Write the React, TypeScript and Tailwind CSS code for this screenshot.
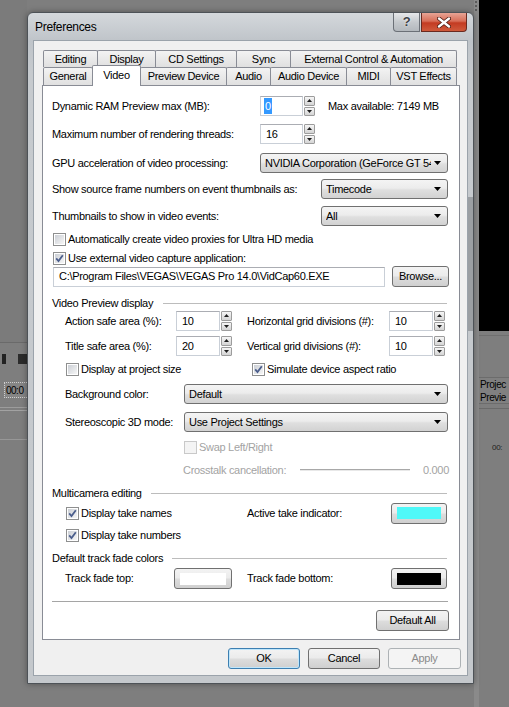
import React from 'react';

type Kids = { children?: React.ReactNode };

function Check({ checked = false, disabled = false }: { checked?: boolean; disabled?: boolean }) {
  if (disabled) {
    return <span className="h-[13px] w-[13px] shrink-0 border border-[#c9c9c9] bg-[#f4f4f4]" />;
  }
  return (
    <span className="flex h-[13px] w-[13px] shrink-0 border border-[#8e8f8f] bg-white p-[1px]">
      <span className="flex h-full w-full items-center justify-center bg-gradient-to-br from-[#cbcfd5] to-[#f6f6f6]">
        {checked && (
          <svg width="9" height="9" viewBox="0 0 9 9">
            <path d="M1.2 4.4 L3.5 7 L7.8 1.3" fill="none" stroke="#4b5e8c" strokeWidth="1.8" />
          </svg>
        )}
      </span>
    </span>
  );
}

function Field({ className = '', children }: Kids & { className?: string }) {
  return (
    <div className={`flex h-[20px] shrink-0 items-center overflow-hidden whitespace-nowrap border border-[#c9cfd7] border-t-[#abadb3] bg-white pl-[5px] ${className}`}>
      {children}
    </div>
  );
}

function Spin() {
  return (
    <div className="ml-[1px] flex h-[20px] w-[11px] shrink-0 flex-col gap-[1px]">
      <div className="flex flex-1 items-center justify-center rounded-[1px] border border-[#9c9c9c] bg-gradient-to-b from-[#f6f6f6] to-[#d4d4d4]">
        <svg width="5" height="3" viewBox="0 0 5 3">
          <path d="M0 3 L2.5 0 L5 3Z" fill="#1e1e1e" />
        </svg>
      </div>
      <div className="flex flex-1 items-center justify-center rounded-[1px] border border-[#9c9c9c] bg-gradient-to-b from-[#f6f6f6] to-[#d4d4d4]">
        <svg width="5" height="3" viewBox="0 0 5 3">
          <path d="M0 0 L5 0 L2.5 3Z" fill="#1e1e1e" />
        </svg>
      </div>
    </div>
  );
}

function Combo({ className, text }: { className: string; text: string }) {
  return (
    <div className={`flex h-[20px] shrink-0 items-center rounded-[3px] border border-[#707070] bg-[linear-gradient(to_bottom,#f4f4f4_0%,#ececec_45%,#dfdfdf_55%,#d2d2d2_100%)] pl-[4px] pr-[6px] ${className}`}>
      <span className="flex-1 overflow-hidden whitespace-nowrap">{text}</span>
      <svg width="7" height="4" viewBox="0 0 7 4" className="ml-[3px] shrink-0">
        <path d="M0 0 H7 L3.5 4Z" fill="#000" />
      </svg>
    </div>
  );
}

function Btn({ className, children }: Kids & { className: string }) {
  return (
    <div className={`flex h-[21px] shrink-0 items-center justify-center rounded-[3px] border border-[#707070] bg-[linear-gradient(to_bottom,#f3f3f3_0%,#ebebeb_48%,#dddddd_52%,#cfcfcf_100%)] ${className}`}>
      {children}
    </div>
  );
}

function ColorBtn({ className, swatch }: { className: string; swatch: string }) {
  return (
    <Btn className={`px-[5px] ${className}`}>
      <span className={`h-[12px] w-full ${swatch}`} />
    </Btn>
  );
}

function Group({ label, gap }: { label: string; gap: string }) {
  return (
    <div className="flex h-[14px] items-center">
      <span>{label}</span>
      <span className={`mr-[2px] h-px flex-1 bg-[#bcbcbc] ${gap}`} />
    </div>
  );
}

function Tab({ w, label, active = false, first = false }: { w: string; label: string; active?: boolean; first?: boolean }) {
  const base = `flex shrink-0 items-center justify-center rounded-t-[2px] border border-b-0 border-[#898c95] whitespace-nowrap ${w} ${first ? '' : '-ml-px'}`;
  if (active) {
    return <div className={`${base} relative z-10 -mt-[2px] h-[21px] bg-white pb-[2px]`}>{label}</div>;
  }
  return <div className={`${base} h-full bg-gradient-to-b from-[#f3f3f3] to-[#e0e0e0]`}>{label}</div>;
}

function Preferences() {
  return (
    <div className="absolute left-[27px] top-[12px] flex h-[672px] w-[447px] flex-col rounded-t-[6px] border border-[#4d5257] bg-[linear-gradient(to_bottom,#d4d8dc_0px,#bfc4c9_28px,#c6cace_60px,#c4c8cc_100%)] shadow-[0_0_6px_rgba(0,0,0,0.35)]">
      {/* title bar */}
      <div className="flex h-[27px] shrink-0 items-start">
        <span className="pl-[7px] pt-[5px] text-[12px] tracking-[-0.3px] text-black">Preferences</span>
        <div className="ml-auto mr-[6px] flex h-[19px] gap-[1px]">
          <div className="flex w-[27px] items-center justify-center rounded-bl-[4px] border border-t-0 border-[#6b7077] bg-gradient-to-b from-[#e6e8ea] via-[#c5c9cd] to-[#b3b8bd] text-[13px] font-bold text-[#3e4146] [text-shadow:0_0_2px_#fff]">
            ?
          </div>
          <div className="flex w-[46px] items-center justify-center rounded-br-[4px] border border-t-0 border-[#6a2a20] bg-[linear-gradient(to_bottom,#e7a495_0%,#d86e58_45%,#c33b22_55%,#cf5a3c_100%)]">
            <svg width="14" height="11" viewBox="0 0 14 11">
              <path d="M2 1.5 L12 9.5 M12 1.5 L2 9.5" stroke="#4a1a12" strokeWidth="4" strokeLinecap="round" />
              <path d="M2 1.5 L12 9.5 M12 1.5 L2 9.5" stroke="#ffffff" strokeWidth="2.4" strokeLinecap="round" />
            </svg>
          </div>
        </div>
      </div>

      <div className="flex flex-1">
        <div className="w-[5px] shrink-0" />
        {/* client area */}
        <div className="flex h-[636px] w-[435px] shrink-0 flex-col border border-[#9ba3ab] bg-[#f0f0f0] pl-[8px] pt-[9px]">
          <div className="mr-[7px] flex flex-col">
            <div className="ml-[1px] flex h-[17px]">
              <Tab first w="w-[55px]" label="Editing" />
              <Tab w="w-[59px]" label="Display" />
              <Tab w="w-[82px]" label="CD Settings" />
              <Tab w="w-[55px]" label="Sync" />
              <Tab w="w-[167px]" label="External Control & Automation" />
            </div>
            <div className="ml-[1px] flex h-[18px] items-start">
              <Tab first w="w-[50px]" label="General" />
              <Tab active w="w-[49px]" label="Video" />
              <Tab w="w-[87px]" label="Preview Device" />
              <Tab w="w-[45px]" label="Audio" />
              <Tab w="w-[77px]" label="Audio Device" />
              <Tab w="w-[45px]" label="MIDI" />
              <Tab w="w-[67px]" label="VST Effects" />
            </div>

            {/* tab page */}
            <div className="flex h-[555px] flex-col border border-[#898c95] bg-white pl-[9px] pr-[10px] pt-[10px]">
              <div className="flex h-[20px] items-center">
                <span className="w-[208px] shrink-0">Dynamic RAM Preview max (MB):</span>
                <Field className="w-[43px] !pl-[3px]">
                  <span className="bg-[#3399ff] px-[1px] text-white">0</span>
                </Field>
                <Spin />
                <span className="ml-[13px]">Max available: 7149 MB</span>
              </div>
              <div className="mt-[8px] flex h-[20px] items-center">
                <span className="w-[208px] shrink-0">Maximum number of rendering threads:</span>
                <Field className="w-[43px]">16</Field>
                <Spin />
              </div>
              <div className="mt-[9px] flex h-[20px] items-center">
                <span className="w-[208px] shrink-0">GPU acceleration of video processing:</span>
                <Combo className="w-[188px]" text="NVIDIA Corporation (GeForce GT 540M)" />
              </div>
              <div className="mt-[6px] flex h-[20px] items-center">
                <span className="w-[269px] shrink-0 whitespace-nowrap">Show source frame numbers on event thumbnails as:</span>
                <Combo className="w-[127px]" text="Timecode" />
              </div>
              <div className="mt-[7px] flex h-[20px] items-center">
                <span className="w-[269px] shrink-0">Thumbnails to show in video events:</span>
                <Combo className="w-[127px]" text="All" />
              </div>
              <div className="ml-[1px] mt-[6px] flex h-[14px] items-center gap-[2px]">
                <Check />
                <span>Automatically create video proxies for Ultra HD media</span>
              </div>
              <div className="ml-[1px] mt-[5px] flex h-[14px] items-center gap-[2px]">
                <Check checked />
                <span>Use external video capture application:</span>
              </div>
              <div className="mt-[1px] flex h-[21px] items-center">
                <Field className="ml-[1px] w-[332px]">C:\Program Files\VEGAS\VEGAS Pro 14.0\VidCap60.EXE</Field>
                <Btn className="ml-auto w-[57px]">Browse...</Btn>
              </div>

              <div className="mt-[9px]">
                <Group label="Video Preview display" gap="ml-[10px]" />
              </div>
              <div className="mt-[1px] flex h-[20px] items-center">
                <span className="ml-[13px] w-[111px] shrink-0">Action safe area (%):</span>
                <Field className="w-[44px]">10</Field>
                <Spin />
                <span className="ml-[15px] w-[142px] shrink-0">Horizontal grid divisions (#):</span>
                <Field className="w-[44px]">10</Field>
                <Spin />
              </div>
              <div className="mt-[5px] flex h-[20px] items-center">
                <span className="ml-[13px] w-[111px] shrink-0">Title safe area (%):</span>
                <Field className="w-[44px]">20</Field>
                <Spin />
                <span className="ml-[15px] w-[142px] shrink-0">Vertical grid divisions (#):</span>
                <Field className="w-[44px]">10</Field>
                <Spin />
              </div>
              <div className="mt-[6px] flex h-[14px] items-center">
                <div className="flex w-[200px] shrink-0 items-center gap-[2px] pl-[14px]">
                  <Check />
                  <span>Display at project size</span>
                </div>
                <div className="flex items-center gap-[2px]">
                  <Check checked />
                  <span>Simulate device aspect ratio</span>
                </div>
              </div>
              <div className="mt-[8px] flex h-[20px] items-center">
                <span className="ml-[13px] w-[119px] shrink-0">Background color:</span>
                <Combo className="w-[264px]" text="Default" />
              </div>
              <div className="mt-[8px] flex h-[20px] items-center">
                <span className="ml-[13px] w-[119px] shrink-0">Stereoscopic 3D mode:</span>
                <Combo className="w-[264px]" text="Use Project Settings" />
              </div>
              <div className="ml-[132px] mt-[8px] flex h-[14px] items-center gap-[2px] text-[#a3a3a3]">
                <Check disabled />
                <span>Swap Left/Right</span>
              </div>
              <div className="ml-[131px] mt-[9px] flex h-[14px] items-center text-[#a3a3a3]">
                <span className="w-[117px] shrink-0">Crosstalk cancellation:</span>
                <span className="h-[2px] w-[110px] shrink-0 border-t border-[#a8a8a8] bg-[#e8e8e8]" />
                <span className="flex-1 text-right">0.000</span>
              </div>

              <div className="mt-[9px]">
                <Group label="Multicamera editing" gap="ml-[9px]" />
              </div>
              <div className="mt-[3px] flex h-[20px] items-center">
                <div className="flex w-[195px] shrink-0 items-center gap-[2px] pl-[14px]">
                  <Check checked />
                  <span>Display take names</span>
                </div>
                <span className="w-[144px] shrink-0">Active take indicator:</span>
                <ColorBtn className="w-[56px]" swatch="bg-[#4ff8f8]" />
              </div>
              <div className="mt-[5px] flex h-[14px] items-center gap-[2px] pl-[14px]">
                <Check checked />
                <span>Display take numbers</span>
              </div>

              <div className="mt-[9px]">
                <Group label="Default track fade colors" gap="ml-[9px]" />
              </div>
              <div className="mt-[3px] flex h-[21px] items-center">
                <span className="ml-[13px] w-[109px] shrink-0">Track fade top:</span>
                <ColorBtn className="w-[58px]" swatch="bg-white" />
                <span className="ml-[15px] w-[144px] shrink-0">Track fade bottom:</span>
                <ColorBtn className="w-[56px]" swatch="bg-black" />
              </div>
              <div className="mr-[1px] mt-[12px] h-px bg-[#a5a5a5]" />
              <div className="mt-[8px] flex justify-end">
                <Btn className="h-[20px] w-[73px]">Default All</Btn>
              </div>
            </div>
          </div>

          <div className="mr-[6px] mt-[8px] flex justify-end gap-[9px]">
            <Btn className="w-[72px] !border-[#3c7fb1] bg-[linear-gradient(to_bottom,#f2f6f9_0%,#e6edf2_48%,#d5e0e8_52%,#c9d6e0_100%)] shadow-[inset_0_0_0_1px_#bfe6fb]">OK</Btn>
            <Btn className="-ml-px w-[72px]">Cancel</Btn>
            <Btn className="-ml-px w-[73px] !border-[#adb2b5] !bg-none bg-[#f4f4f4] text-[#8b8b8b]">Apply</Btn>
          </div>
        </div>
        <div className="flex w-[5px] shrink-0 flex-col">
          <div className="h-[157px]" />
          <div className="h-[134px] bg-[#9b9fa3]" />
        </div>
      </div>
    </div>
  );
}

export default function App() {
  return (
    <div className="relative h-[707px] w-[509px] overflow-hidden bg-[#7e7e7e] font-['Liberation_Sans',Arial,sans-serif] text-[11px] tracking-[-0.3px] text-black">
      {/* application behind the dialog */}
      <div className="flex h-full">
        <div className="flex w-[27px] shrink-0 flex-col">
          <div className="h-[343px] border-b border-[#6a6a6a] bg-[#7b7b7b]" />
          <div className="mt-[11px] flex h-[10px]">
            <span className="ml-[2px] w-[4px] bg-[#222]" />
            <span className="ml-[12px] w-[9px] bg-[#2b2b2b]" />
          </div>
          <div className="ml-[4px] mt-[18px] flex h-[16px] items-center whitespace-nowrap border border-r-0 border-dotted border-[#cfcfcf] bg-[#858585] pl-[1px] text-[10px] tracking-[-0.5px]">
            00:0
          </div>
          <div className="mt-[9px] h-px bg-[#9c9c9c]" />
          <div className="mt-[2px] h-px bg-[#a2a2a2]" />
          <div className="mt-[28px] h-px bg-[#979797]" />
        </div>
        <div className="flex-1" />
        <div className="flex w-[35px] shrink-0">
          <div className="flex w-[5px] flex-col bg-[#8a8a8a]">
            <div className="ml-[1px] mt-[1px] flex flex-col gap-[2px]">
              <span className="h-[2px] w-[2px] bg-[#5a5a5a]" />
              <span className="h-[2px] w-[2px] bg-[#5a5a5a]" />
              <span className="h-[2px] w-[2px] bg-[#5a5a5a]" />
            </div>
          </div>
          <div className="flex w-[30px] flex-col">
            <div className="h-[331px] bg-black" />
            <div className="mt-[4px] h-px bg-[#6f6f6f]" />
            <div className="mt-[41px] flex h-[27px] flex-col justify-center whitespace-nowrap border-y border-[#6c6c6c] bg-[#808080] pl-[1px] text-[10px] leading-[13px] tracking-[-0.4px]">
              <span>Projec</span>
              <span>Previe</span>
            </div>
            <div className="mt-[4px] h-px bg-[#6a6a6a]" />
            <span className="ml-[13px] mt-[33px] text-[8px] text-[#222]">00:</span>
          </div>
        </div>
      </div>
      <Preferences />
    </div>
  );
}
